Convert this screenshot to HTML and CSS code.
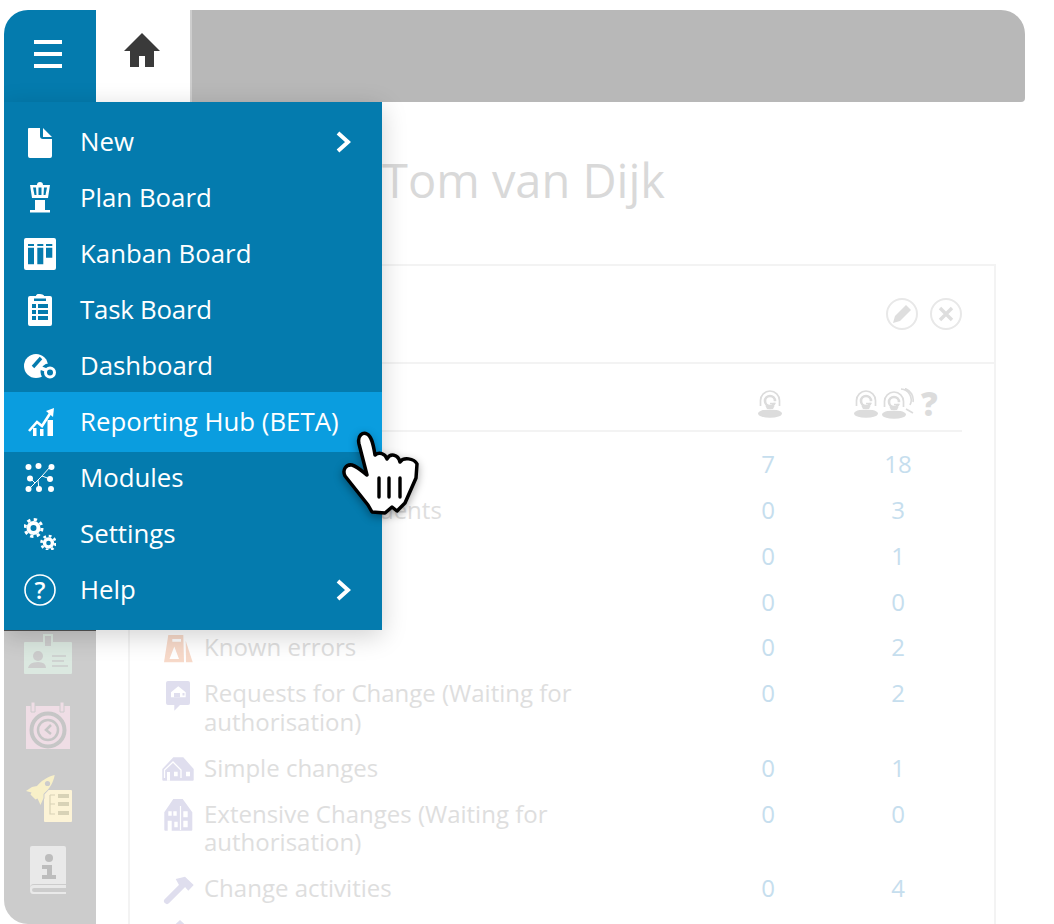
FILE: index.html
```html
<!DOCTYPE html>
<html lang="en">
<head>
    <meta charset="UTF-8">
    <title>Dashboard</title>
    <meta name="viewport" content="width=device-width, initial-scale=1.0">
    <link rel="stylesheet" href="styles.css">
</head>
<body>
    <svg class="defs" width="0" height="0">
        <symbol id="agent" viewBox="0 0 24 28">
            <ellipse cx="12" cy="23.500" rx="12" ry="4.300" fill="currentColor"/>
            <path d="M12 19.500L5 20V18H19V20Z" fill="#fff"/>
            <path d="M7.500 16H16.500L15 19H9Z" fill="currentColor"/>
            <path d="M2.500 16V10.500A9.500 9.500 0 0 1 21.500 10.500V16" fill="none" stroke="currentColor" stroke-width="1.700"/>
            <circle cx="12" cy="11" r="5" fill="none" stroke="currentColor" stroke-width="2.600"/>
            <path d="M12 12H19" stroke="#fff" stroke-width="1.600"/>
            <path d="M12 13.500H17" stroke="currentColor" stroke-width="1.400"/>
        </symbol>
    </svg>

    <div class="app">
        <header class="topbar">
            <div class="menu-toggle">
                <svg width="28" height="28" viewBox="0 0 28 28"><path d="M0 0H28V4H0ZM0 12H28V16H0ZM0 24H28V28H0Z" fill="#fff"/></svg>
            </div>
            <div class="home-tab">
                <svg width="36" height="34" viewBox="0 0 36 34"><path d="M18 0L36 18H30V34H21V23H15V34H6V18H0Z" fill="#3a3a3a"/></svg>
            </div>
            <div class="tab-strip"></div>
        </header>

        <div class="main">
            <aside class="sidebar">
                <svg width="60" height="68" viewBox="0 0 60 68">
                    <path d="M5 8H23V0H33V8H51Q52 8 52 9V39Q52 40 51 40H5Q4 40 4 39V9Q4 8 5 8Z" fill="#dbe8e0"/>
                    <path d="M25 2H31V12H25Z" fill="#ccc"/>
                    <circle cx="18" cy="22" r="5" fill="#ccc"/>
                    <path d="M8 34Q9 28 18 28Q26 28 26 34Z" fill="#ccc"/>
                    <path d="M32 22H46M32 27H44M32 32H48" stroke="#ccc" stroke-width="1.600"/>
                </svg>
                <svg width="60" height="72" viewBox="0 0 60 72">
                    <path d="M6 4H50V47H6Z" fill="#efdde5"/>
                    <path d="M11 0H15V10H11ZM40 0H44V10H40Z" fill="#efdde5" stroke="#ccc" stroke-width="1"/>
                    <circle cx="28" cy="28" r="16.500" fill="none" stroke="#c6c6c6" stroke-width="4"/>
                    <circle cx="28" cy="28" r="10" fill="none" stroke="#c6c6c6" stroke-width="2.500"/>
                    <path d="M31 23L26 28L31 32" fill="none" stroke="#c6c6c6" stroke-width="2.500"/>
                </svg>
                <svg width="60" height="72" viewBox="0 0 60 72">
                    <path d="M25 16H51Q52 16 52 17V47Q52 48 51 48H25Q24 48 24 47V17Q24 16 25 16Z" fill="#fcf3d6"/>
                    <path d="M30 21V40H35M30 30H35M30 21H35" fill="none" stroke="#d8d2b6" stroke-width="1.200"/>
                    <path d="M38 20H49V24H38ZM38 28H49V32H38ZM38 37H49V41H38Z" fill="#d8d2b6"/>
                    <path d="M34.700 1C27 3 21 7 17 12L12 13L6 17L11.500 18.500L10.500 20.500L15.500 25.500L17.500 24.500L20.500 31L23.500 24V20C29 15 33 10 34.700 1Z" fill="#f8f0c8" stroke="#ccc" stroke-width="2" paint-order="stroke"/>
                    <circle cx="27.500" cy="9.500" r="2.600" fill="#ccc"/>
                </svg>
                <svg width="60" height="78" viewBox="0 0 60 78">
                    <path d="M12 0H44Q46 0 46 2V38H14Q10 38 10 42V2Q10 0 12 0Z" fill="#e9e9e9"/>
                    <path d="M14 39H46V42H14Q12 42 12 44Q12 46 14 46H46V48H13Q10 48 10 44V42Q10 39 14 39Z" fill="#e9e9e9"/>
                    <circle cx="29" cy="12" r="4" fill="#bdbdbd"/>
                    <path d="M22 19H32V29H36V33H22V29H27V23H22Z" fill="#bdbdbd"/>
                </svg>
            </aside>

            <main class="content">
                <h1 class="page-title">Tom van Dijk</h1>
                <section class="card">
                    <div class="card-head">
                        <span class="round-btn">
                            <svg width="20" height="20" viewBox="0 0 20 20"><path d="M14 1L19 6L8 17L1 19L3 12Z" fill="#dedede"/></svg>
                        </span>
                        <span class="round-btn">
                            <svg width="16" height="16" viewBox="0 0 16 16"><path d="M2 2L14 14M14 2L2 14" stroke="#dedede" stroke-width="3.400"/></svg>
                        </span>
                    </div>
                    <div class="card-body">
                        <div class="table-head">
                            <span class="col-num single-col"><svg class="agent"><use href="#agent"/></svg></span>
                            <span class="col-num group-col">
                                <svg class="agent"><use href="#agent"/></svg>
                                <svg class="agents" width="34" height="32" viewBox="0 0 34 32">
                                    <path d="M19 1A11 11 0 0 1 28 17M23 0.500A12 12 0 0 1 31 14M24 21L31 25" fill="none" stroke="#dcdcdc" stroke-width="1.600"/>
                                    <use href="#agent" x="0" y="3" width="24" height="28"/>
                                </svg>
                                <b class="unknown">?</b>
                            </span>
                        </div>

                        <div class="row">
                            <span class="row-icon"></span>
                            <span class="label">Calls</span>
                            <span class="num">7</span><span class="num">18</span>
                        </div>
                        <div class="row">
                            <span class="row-icon"></span>
                            <span class="label">Unassigned incidents</span>
                            <span class="num">0</span><span class="num">3</span>
                        </div>
                        <div class="row">
                            <span class="row-icon"></span>
                            <span class="label">Problems</span>
                            <span class="num">0</span><span class="num">1</span>
                        </div>
                        <div class="row">
                            <span class="row-icon"></span>
                            <span class="label">Major problems</span>
                            <span class="num">0</span><span class="num">0</span>
                        </div>
                        <div class="row">
                            <span class="row-icon">
                                <svg width="34" height="30" viewBox="0 0 34 30" fill="#f7d9c9">
                                    <path d="M7.300 2H22.300L23 29.300H3ZM11.300 6V8.700H20V6ZM13.300 13.500L8.500 26H18Z" fill-rule="evenodd"/>
                                    <path d="M24.700 7.700L31.700 29.300H25Z"/>
                                </svg>
                            </span>
                            <span class="label">Known errors</span>
                            <span class="num">0</span><span class="num">2</span>
                        </div>
                        <div class="row">
                            <span class="row-icon">
                                <svg width="34" height="32" viewBox="0 0 34 32" fill="#dfdeee">
                                    <path d="M7 2H27Q29 2 29 4V24Q29 26 27 26H19L13.300 31.700V26H7Q5 26 5 24V4Q5 2 7 2ZM17.300 7.300L10 13.300V18.300H24.700V13.300Z" fill-rule="evenodd"/>
                                    <path d="M13 14H19V18.300H13ZM21.500 14H23.500V16.500H21.500Z"/>
                                </svg>
                            </span>
                            <span class="label">Requests for Change (Waiting for authorisation)</span>
                            <span class="num">0</span><span class="num">2</span>
                        </div>
                        <div class="row">
                            <span class="row-icon">
                                <svg width="34" height="28" viewBox="0 0 34 28">
                                    <path d="M12.300 3.300H22.300L32.700 15V25.700Q32.700 26.700 31.700 26.700H2.300Q1.300 26.700 1.300 25.700V15Z" fill="#dfdeee"/>
                                    <path d="M3.500 24V16L12 8L20 16V24" fill="none" stroke="#fff" stroke-width="1.300"/>
                                    <path d="M6 18H9V26.700H6ZM13 17.700H16.700V22.300H13ZM25 17.700H29V22.300H25Z" fill="#fff"/>
                                </svg>
                            </span>
                            <span class="label">Simple changes</span>
                            <span class="num">0</span><span class="num">1</span>
                        </div>
                        <div class="row">
                            <span class="row-icon">
                                <svg width="34" height="32" viewBox="0 0 34 32">
                                    <path d="M12.300 -1H21.700L31.300 12.300V29.700Q31.300 30.700 30.300 30.700H4.300Q3.300 30.700 3.300 29.700V12.300ZM7.300 11.300V15.700H10.700V11.300ZM12.300 11.300V15.700H15.700V11.300ZM22.300 11.300V17.300H26.700V11.300ZM6.700 20.700V30.700H10.700V20.700ZM13.300 21.700V27.300H16.700V21.700ZM22.300 20.700V27.300H26.700V20.700Z" fill="#dfdeee" fill-rule="evenodd"/>
                                    <path d="M19.500 6V30" stroke="#fff" stroke-width="1.200"/>
                                </svg>
                            </span>
                            <span class="label">Extensive Changes (Waiting for authorisation)</span>
                            <span class="num">0</span><span class="num">0</span>
                        </div>
                        <div class="row">
                            <span class="row-icon">
                                <svg width="34" height="30" viewBox="0 0 34 30">
                                    <path d="M21 12L6 27" stroke="#dfdeee" stroke-width="6" stroke-linecap="round"/>
                                    <path d="M14.700 5L24 2.700L32.700 11L27.300 16.700L22.300 11L18 11Z" fill="#dfdeee"/>
                                </svg>
                            </span>
                            <span class="label">Change activities</span>
                            <span class="num">0</span><span class="num">4</span>
                        </div>
                        <div class="row">
                            <span class="row-icon">
                                <svg width="34" height="28" viewBox="0 0 34 28"><path d="M19 0L32 12L19 24L6 12Z" fill="#dfdeee"/></svg>
                            </span>
                            <span class="label"></span>
                            <span class="num"></span><span class="num"></span>
                        </div>
                    </div>
                </section>
            </main>
        </div>

        <nav class="menu">
            <a class="menu-item">
                <svg class="menu-icon" viewBox="0 0 32 32"><path d="M5 2H16V10Q16 13 19 13H28V30Q28 32 26 32H6Q4 32 4 30V3Q4 2 5 2ZM19 2L28 11H19Z" fill="#fff"/></svg>
                <span>New</span>
                <svg class="chevron" width="16" height="24" viewBox="0 0 16 24"><path d="M3 3L13 12L3 21" fill="none" stroke="#fff" stroke-width="4"/></svg>
            </a>
            <a class="menu-item">
                <svg class="menu-icon" viewBox="0 0 32 32">
                    <path d="M13 3A3 3 0 0 1 19 3H26L24 16H8L6 3Z" fill="#fff"/>
                    <path d="M9 5.500H12L12.500 13H10.500ZM14.500 5.500H17.500V13H14.500ZM20 5.500H23L21.500 13H19.500Z" fill="#047bae"/>
                    <path d="M11 18H21V28H26V30.500H6V28H11Z" fill="#fff"/>
                </svg>
                <span>Plan Board</span>
            </a>
            <a class="menu-item">
                <svg class="menu-icon" viewBox="0 0 32 32"><path d="M2 0H30Q32 0 32 2V30Q32 32 30 32H2Q0 32 0 30V2Q0 0 2 0ZM4 6V8H10V6ZM13.300 6V8H19.300V6ZM22 6V8H28.300V6ZM4 9.700V26.300H10V9.700ZM13.300 9.700V26.300H19.300V9.700ZM22 9.700V19.700H28.300V9.700Z" fill="#fff" fill-rule="evenodd"/></svg>
                <span>Kanban Board</span>
            </a>
            <a class="menu-item">
                <svg class="menu-icon" viewBox="0 0 32 32"><path d="M6 2H12V1.500Q14 -1 16 0Q19 0 20 1.500V2H26Q28 2 28 4V30Q28 32 26 32H6Q4 32 4 30V4Q4 2 6 2ZM10 4.500V7H22V4.500ZM8 10V14H12V10ZM14 10V14H24V10ZM8 16V20H12V16ZM14 16V20H24V16ZM8 22V26H12V22ZM14 22V26H24V22Z" fill="#fff" fill-rule="evenodd"/></svg>
                <span class="tight">Task Board</span>
            </a>
            <a class="menu-item">
                <svg class="menu-icon" viewBox="0 0 32 32">
                    <circle cx="12" cy="16" r="12" fill="#fff"/>
                    <path d="M9 17L17 8" stroke="#047bae" stroke-width="3.400"/>
                    <circle cx="25" cy="22" r="8.500" fill="#047bae"/>
                    <circle cx="26" cy="22.500" r="4.500" fill="none" stroke="#fff" stroke-width="3"/>
                    <path d="M14 17L22 20" stroke="#fff" stroke-width="3.500"/>
                </svg>
                <span>Dashboard</span>
            </a>
            <a class="menu-item active">
                <svg class="menu-icon" viewBox="0 0 32 32">
                    <path d="M5 25L13 16L18 20L27 6" fill="none" stroke="#fff" stroke-width="2.600"/>
                    <path d="M22 5L30 2L29 11Z" fill="#fff"/>
                    <path d="M9 22H12.500V30H9ZM16 23H19.500V30H16ZM23.500 14H29V30H23.500Z" fill="#fff"/>
                </svg>
                <span>Reporting Hub (BETA)</span>
            </a>
            <a class="menu-item">
                <svg class="menu-icon" viewBox="0 0 32 32">
                    <path d="M18 14L26 5M18 14L26 17M18 14L11 21L6 16M11 21L5 27M14 18L15 27" fill="none" stroke="#fff" stroke-width="1"/>
                    <g fill="#fff">
                        <circle cx="4.500" cy="5" r="3"/><circle cx="14.500" cy="4" r="3"/><circle cx="27.500" cy="5" r="3"/>
                        <circle cx="6" cy="16.500" r="3"/><circle cx="26" cy="17" r="3"/>
                        <circle cx="4.500" cy="27" r="3"/><circle cx="15" cy="27" r="3"/><circle cx="27" cy="27" r="3"/>
                    </g>
                </svg>
                <span>Modules</span>
            </a>
            <a class="menu-item">
                <svg class="menu-icon" viewBox="0 0 32 32" fill="none" stroke="#fff">
                    <circle cx="9.500" cy="10" r="5" stroke-width="4"/>
                    <circle cx="9.500" cy="10" r="8.500" stroke-width="3" stroke-dasharray="3.300 3.370"/>
                    <circle cx="24.500" cy="25" r="4" stroke-width="3.400"/>
                    <circle cx="24.500" cy="25" r="7" stroke-width="2.600" stroke-dasharray="2.800 2.700"/>
                </svg>
                <span>Settings</span>
            </a>
            <a class="menu-item">
                <svg class="menu-icon" viewBox="0 0 32 32">
                    <circle cx="16" cy="16" r="15" fill="none" stroke="#fff" stroke-width="1.600"/>
                    <text class="help-mark" x="16" y="24.500" text-anchor="middle">?</text>
                </svg>
                <span>Help</span>
                <svg class="chevron" width="16" height="24" viewBox="0 0 16 24"><path d="M3 3L13 12L3 21" fill="none" stroke="#fff" stroke-width="4"/></svg>
            </a>
        </nav>

        <svg class="cursor" width="100" height="100" viewBox="0 0 100 100">
            <path d="M42 92L38 85L15 56C12 50 16 44 22 45C28 47 33 52 37 55L29 24C27 15 33 12 37 14C41 16 43 22 45 35C49 32 55 33 57 39C60 33 68 34 70 42C73 37 84 38 87 44L86 58L75 83L67 91L62 87L55 93Z" fill="#fff" stroke="#000" stroke-width="3.500" stroke-linejoin="round"/>
            <path d="M49 58V77M59 58V77M70 58V77" stroke="#000" stroke-width="3.400" stroke-linecap="round"/>
        </svg>
    </div>
</body>
</html>
```

FILE: styles.css
```css
* {
    margin: 0;
    padding: 0;
    box-sizing: border-box;
    font-family: 'Open Sans', sans-serif;
}

html, body {
    height: 100%;
    overflow: hidden;
    background: #fff;
}

.defs {
    position: absolute;
}

.app {
    position: relative;
    display: flex;
    flex-direction: column;
    width: 1021px;
    height: 914px;
    margin: 10px 0 0 4px;
    border-radius: 24px 24px 0 24px;
    overflow: hidden;
}

/* top bar */
.topbar {
    display: flex;
    flex: 0 0 92px;
}

.menu-toggle {
    width: 92px;
    padding: 0 4px 4px 0;
    display: flex;
    align-items: center;
    justify-content: center;
    background: #047bae;
}

.home-tab {
    width: 94px;
    padding: 0 2px 12px 0;
    display: flex;
    align-items: center;
    justify-content: center;
    background: #fff;
}

.tab-strip {
    flex: 1;
    background: #b8b8b8;
    border-left: 2px solid #cdcdcd;
    border-bottom-right-radius: 4px;
}

.main {
    display: flex;
    flex: 1;
    min-height: 0;
}

/* left bar, greyed out */
.sidebar {
    flex: 0 0 92px;
    display: flex;
    flex-direction: column;
    justify-content: flex-end;
    align-items: center;
    background: #ccc;
}

.sidebar svg {
    display: block;
}

.content {
    flex: 1;
    min-width: 0;
    padding: 47px 29px 0 32px;
}

.page-title {
    padding-left: 254px;
    height: 115px;
    font-size: 47px;
    font-weight: 400;
    line-height: 62px;
    color: #d9d9d9;
}

/* widget */
.card {
    border: 2px solid #f3f3f3;
    border-bottom: none;
    height: 700px;
}

.card-head {
    height: 98px;
    padding-right: 32px;
    display: flex;
    justify-content: flex-end;
    align-items: center;
    gap: 12px;
    border-bottom: 2px solid #f3f3f3;
}

.round-btn {
    width: 32px;
    height: 32px;
    display: flex;
    align-items: center;
    justify-content: center;
    border: 2px solid #e8e8e8;
    border-radius: 50%;
}

.card-body {
    padding: 0 32px 0 31px;
}

.table-head {
    height: 68px;
    display: flex;
    justify-content: flex-end;
    border-bottom: 2px solid #f3f3f3;
    margin-bottom: 9.7px;
    color: #dcdcdc;
}

.col-num {
    width: 130px;
    padding-top: 26px;
    display: flex;
}

.single-col {
    padding-left: 56px;
}

.group-col {
    padding-left: 22px;
}

.agent {
    width: 24px;
    height: 28px;
}

.agents {
    margin: -2px 0 0 4px;
}

.unknown {
    margin-left: 5px;
    font-size: 33px;
    line-height: 28px;
    font-weight: 800;
    color: #dcdcdc;
}

.row {
    display: grid;
    grid-template-columns: 43px 400px 1fr 130px 130px;
    grid-template-areas: "icon label gap a b";
    padding: 8.5px 0;
    font-size: 24px;
    line-height: 28.8px;
    color: #dedede;
}

.row-icon {
    grid-area: icon;
    height: 28px;
}

.row-icon svg {
    display: block;
    overflow: visible;
}

.label {
    grid-area: label;
}

.num {
    padding-left: 2px;
    text-align: center;
    color: #c6deee;
}

.row .num:nth-of-type(3) {
    grid-area: a;
}

.row .num:nth-of-type(4) {
    grid-area: b;
}

/* opened main menu */
.menu {
    position: absolute;
    top: 92px;
    left: 0;
    width: 378px;
    height: 528px;
    padding: 12px 0;
    background: #047bae;
    box-shadow: 0 6px 24px rgba(0, 0, 0, 0.18);
}

.menu::after {
    content: "";
    position: absolute;
    left: 0;
    bottom: -1px;
    width: 92px;
    height: 1px;
    background: #4a4a4a;
}

.menu-item {
    display: flex;
    align-items: center;
    height: 56px;
    padding-left: 20px;
    font-size: 25.8px;
    color: #fff;
}

.menu-item span {
    margin-top: -2px;
}

.menu-item .tight {
    letter-spacing: -0.2px;
}

.menu-item.active {
    height: 60px;
    margin: -2px 0;
    position: relative;
    background: #0a9ddf;
}

.menu-icon {
    flex: 0 0 32px;
    width: 32px;
    height: 32px;
    margin-right: 24px;
}

.help-mark {
    font-size: 24px;
    font-weight: 600;
    fill: #fff;
}

.chevron {
    margin-left: auto;
    margin-right: 31px;
}

.cursor {
    position: absolute;
    left: 326px;
    top: 410px;
    filter: drop-shadow(0 3px 4px rgba(0, 0, 0, 0.35));
}
```
